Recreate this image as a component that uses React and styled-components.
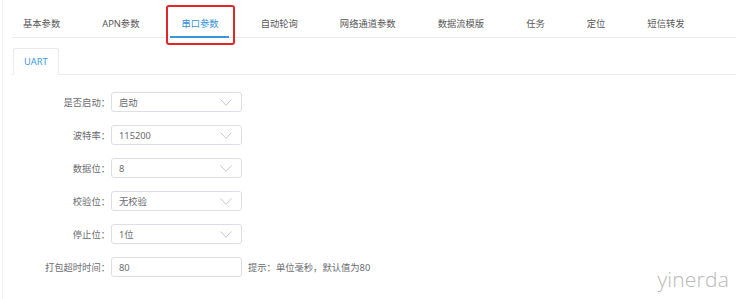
import styled, { createGlobalStyle } from 'styled-components'

const GlobalStyle = createGlobalStyle`
  html, body {
    margin: 0;
    padding: 0;
    background: #fff;
  }
  body {
    font-family: "Noto Sans", "Noto Sans CJK SC", sans-serif;
  }
`

const Page = styled.div`
  position: relative;
  height: 299px;
  margin-left: 2px;
  border-left: 1px solid #f1f2f4;
  overflow: hidden;
`

const TabBar = styled.nav`
  display: flex;
  margin-left: 9px;
  padding-top: 11px;
  border-bottom: 1px solid #e8eaef;
`

const Tab = styled.div`
  position: relative;
  height: 26px;
  line-height: 26px;
  padding: 0 21px;
  font-size: 9.3px;
  white-space: nowrap;
  color: ${(props) => (props.active ? '#3592da' : '#585858')};

  &:first-child {
    padding-left: 11px;
  }

  ${(props) =>
    props.active &&
    `
    &::after {
      content: '';
      position: absolute;
      left: 10px;
      right: 11px;
      bottom: -1px;
      height: 2px;
      background: #3a96dc;
    }
  `}
`

// red annotation frame drawn over the active tab
const Highlight = styled.span`
  position: absolute;
  left: 6px;
  right: 5px;
  top: -6px;
  bottom: -8px;
  border: 2px solid #e2262a;
  border-radius: 3px;
`

const SubTabBar = styled.div`
  display: flex;
  margin: 10px 0 0 9px;
  padding-left: 1px;
  border-bottom: 1px solid #e8eaef;
`

const SubTab = styled.div`
  height: 25px;
  line-height: 26px;
  padding: 0 10px;
  margin-bottom: -1px;
  border: 1px solid #e8eaef;
  border-bottom-color: #fff;
  border-radius: 3px 3px 0 0;
  font-size: 9.3px;
  color: #3d9ae0;
`

const Form = styled.form`
  display: flex;
  flex-direction: column;
  gap: 13px;
  padding-top: 17px;
`

const Row = styled.div`
  display: flex;
  align-items: center;
  height: 20px;
`

const Label = styled.label`
  width: 108px;
  box-sizing: border-box;
  padding-right: 1px;
  text-align: right;
  font-size: 9.3px;
  color: #6a6c70;
  white-space: nowrap;
`

const Field = styled.div`
  display: flex;
  align-items: center;
  justify-content: space-between;
  width: 131px;
  height: 20px;
  box-sizing: border-box;
  padding: 0 9px 0 7px;
  border: 1px solid #dcdfe6;
  border-radius: 3px;
  font-size: 9.3px;
  color: #6a6c70;
`

const Hint = styled.span`
  margin-left: 6px;
  font-size: 9.3px;
  color: #6a6c70;
`

const Watermark = styled.div`
  position: absolute;
  right: 7px;
  bottom: 6px;
  font-family: "Open Sans", "Noto Sans", sans-serif;
  font-weight: 300;
  font-size: 21px;
  color: #b8b8b8;
  letter-spacing: 0.2px;
`

const Chevron = () => (
  <svg width="12" height="7" viewBox="0 0 12 7">
    <polyline
      points="0.5,0.5 6,6.3 11.5,0.5"
      fill="none"
      stroke="#c4c7ce"
      strokeWidth="1"
    />
  </svg>
)

const tabs = [
  '基本参数',
  'APN参数',
  '串口参数',
  '自动轮询',
  '网络通道参数',
  '数据流模版',
  '任务',
  '定位',
  '短信转发',
]

const fields = [
  { label: '是否启动：', value: '启动', select: true },
  { label: '波特率：', value: '115200', select: true },
  { label: '数据位：', value: '8', select: true },
  { label: '校验位：', value: '无校验', select: true },
  { label: '停止位：', value: '1位', select: true },
  { label: '打包超时时间：', value: '80', hint: '提示：单位毫秒，默认值为80' },
]

const App = () => {
  return (
    <>
      <GlobalStyle />
      <Page>
        <TabBar>
          {tabs.map((name) => (
            <Tab key={name} active={name === '串口参数'}>
              {name}
              {name === '串口参数' && <Highlight />}
            </Tab>
          ))}
        </TabBar>
        <SubTabBar>
          <SubTab>UART</SubTab>
        </SubTabBar>
        <Form>
          {fields.map((f) => (
            <Row key={f.label}>
              <Label>{f.label}</Label>
              <Field>
                <span>{f.value}</span>
                {f.select && <Chevron />}
              </Field>
              {f.hint && <Hint>{f.hint}</Hint>}
            </Row>
          ))}
        </Form>
        <Watermark>yinerda</Watermark>
      </Page>
    </>
  )
}

export default App
